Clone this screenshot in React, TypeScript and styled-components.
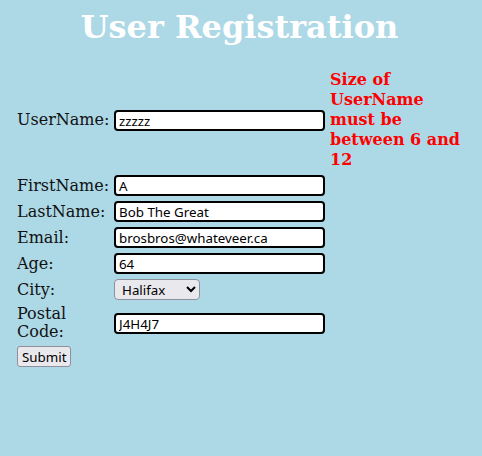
import React from "react";
import styled, { createGlobalStyle } from "styled-components";

const GlobalStyle = createGlobalStyle`
  html, body { margin: 0; padding: 0; background: #add8e6; }
  body { font-family: "DejaVu Serif", serif; font-size: 16px; }
`;

const Page = styled.div`
  padding: 8px;
  min-height: 440px;
`;

const Title = styled.h1`
  margin: 0;
  padding-right: 3px;
  text-align: center;
  color: #ffffff;
  font-family: "DejaVu Serif", serif;
  font-size: 32px;
  font-weight: bold;
`;

const Form = styled.form`
  margin-top: 24px;
  padding-left: 9px;
  display: grid;
  grid-template-columns: 97px 216px 140px;
  row-gap: 5px;
  align-items: center;
`;

const Label = styled.label`
  color: #111;
  font-size: 16px;
  line-height: 18px;
`;

const Field = styled.input`
  box-sizing: border-box;
  width: 211px;
  height: 21px;
  border: 2px solid #000;
  border-radius: 4px;
  background: #fff;
  padding: 1px 3px 0;
  font-family: "Noto Sans", sans-serif;
  font-size: 13.33px;
  color: #000;
  outline: none;
`;

const Error = styled.div`
  color: #ff0000;
  font-weight: bold;
  font-size: 16px;
  line-height: 20px;
`;

const Select = styled.select`
  width: 86px;
  height: 21px;
  font-family: "Noto Sans", sans-serif;
  font-size: 13.33px;
  background: #e9e9ed;
  border: 1px solid #8f8f9d;
  border-radius: 4px;
  color: #000;
  padding: 0 2px 0 3px;
`;

const Button = styled.button`
  grid-column: 1;
  justify-self: start;
  height: 21px;
  padding: 0 4px;
  font-family: "Noto Sans", sans-serif;
  font-size: 13.33px;
  background: #e9e9ed;
  border: 1px solid #8f8f9d;
  border-radius: 3px;
  color: #000;
`;

const Empty = styled.div``;

export default function App() {
  return (
    <Page>
      <GlobalStyle />
      <Title>User Registration</Title>
      <Form onSubmit={(e) => e.preventDefault()}>
        <Label>UserName:</Label>
        <Field defaultValue="zzzzz" />
        <Error>Size of UserName must be between 6 and 12</Error>

        <Label>FirstName:</Label>
        <Field defaultValue="A" />
        <Empty />

        <Label>LastName:</Label>
        <Field defaultValue="Bob The Great" />
        <Empty />

        <Label>Email:</Label>
        <Field defaultValue="brosbros@whateveer.ca" />
        <Empty />

        <Label>Age:</Label>
        <Field defaultValue="64" />
        <Empty />

        <Label>City:</Label>
        <Select defaultValue="Halifax">
          <option>Halifax</option>
          <option>Toronto</option>
          <option>Montreal</option>
        </Select>
        <Empty />

        <Label>Postal Code:</Label>
        <Field defaultValue="J4H4J7" />
        <Empty />

        <Button type="submit">Submit</Button>
      </Form>
    </Page>
  );
}
